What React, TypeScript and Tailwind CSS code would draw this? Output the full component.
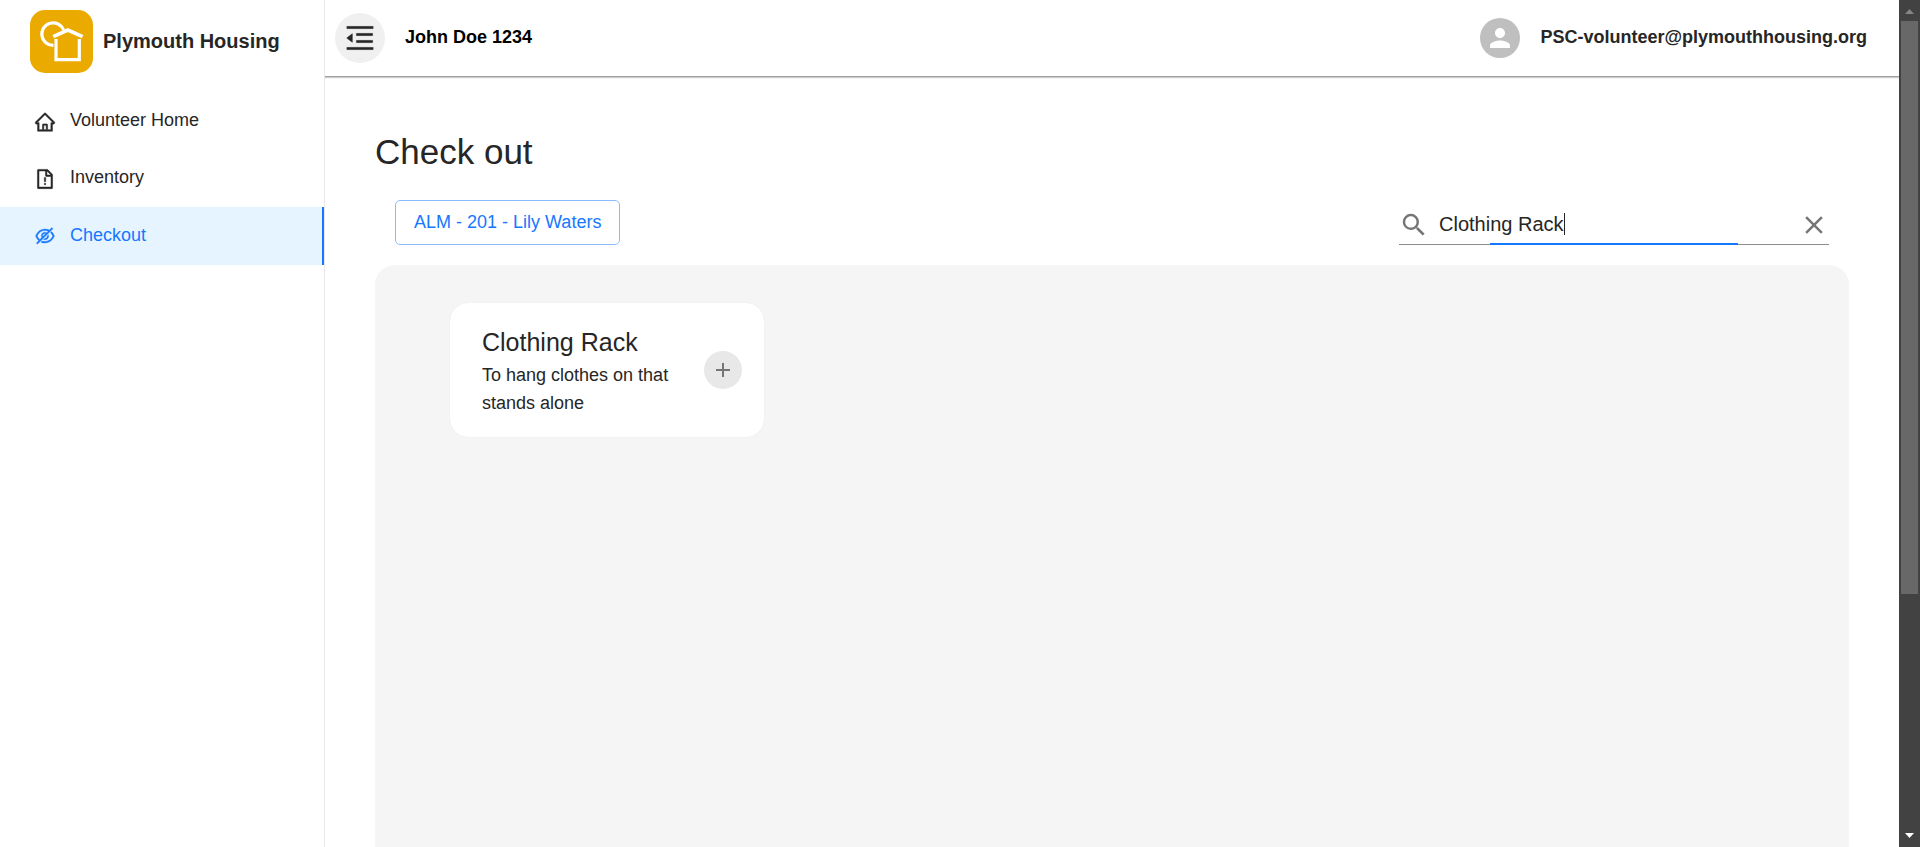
import { useState } from "react";
import type { ReactNode } from "react";
import {
  AiOutlineHome,
  AiOutlineFileExclamation,
  AiOutlineEyeInvisible,
  AiOutlineMenuFold,
} from "react-icons/ai";
import { MdAdd, MdClose, MdPerson, MdSearch } from "react-icons/md";

function Logo() {
  return (
    <svg viewBox="0 0 63 63" className="size-[63px] shrink-0" aria-hidden="true">
      <rect width="63" height="63" rx="15" fill="#eaaa00" />
      <g fill="none" stroke="#fff" strokeWidth="3.2">
        <path d="M23.5 35.4A11.3 11.3 0 1 1 33.6 19.8" />
        <path d="M23.2 26.6 37.8 20 52.6 26.6" strokeWidth="3.7" />
        <path d="M26 29V49.7H49.3V29" />
      </g>
    </svg>
  );
}

function NavItem({ icon, label, active }: { icon: ReactNode; label: string; active?: boolean }) {
  return (
    <li>
      <a
        href="#"
        aria-current={active ? "page" : undefined}
        className={
          active
            ? "flex h-[58px] items-center gap-3.5 border-r-2 border-[#1677ff] bg-[#e6f4ff] pl-[34px] text-[#1677ff]"
            : "flex h-[57px] items-center gap-3.5 pl-[34px] text-[#262626]"
        }
      >
        {icon}
        <span className="pb-0.5">{label}</span>
      </a>
    </li>
  );
}

function Sidebar() {
  return (
    <aside className="w-[325px] shrink-0 border-r border-[#e8e8e8]">
      <div className="flex items-center gap-2.5 pt-2.5 pl-[30px]">
        <Logo />
        <span className="pb-0.5 text-[20px] font-bold text-[#262626]">Plymouth Housing</span>
      </div>
      <nav className="mt-5">
        <ul>
          <NavItem icon={<AiOutlineHome size={22} strokeWidth={24} />} label="Volunteer Home" />
          <NavItem icon={<AiOutlineFileExclamation size={22} strokeWidth={24} />} label="Inventory" />
          <NavItem icon={<AiOutlineEyeInvisible size={22} strokeWidth={16} />} label="Checkout" active />
        </ul>
      </nav>
    </aside>
  );
}

function Header() {
  return (
    <header className="flex h-[77px] shrink-0 items-center border-b border-[#a0a0a0] pr-8 pl-2.5 shadow-[0_1px_1px_rgba(0,0,0,0.2)]">
      <button
        type="button"
        aria-label="Collapse menu"
        className="flex size-[50px] items-center justify-center rounded-full bg-[#f0f0f0] text-[#262626]"
      >
        <AiOutlineMenuFold size={34} strokeWidth={6} />
      </button>
      <span className="ml-5 pb-0.5 font-bold text-black">John Doe 1234</span>
      <div className="ml-auto flex items-center gap-5">
        <span className="flex size-10 items-center justify-center rounded-full bg-[#bfbfbf] text-white">
          <MdPerson size={30} />
        </span>
        <span className="pb-0.5 font-bold text-[#262626]">PSC-volunteer@plymouthhousing.org</span>
      </div>
    </header>
  );
}

function SearchField() {
  const [query, setQuery] = useState("Clothing Rack");
  return (
    <div className="relative flex h-10 w-[430px] items-center border-b border-[#8c8c8c] text-[#757575]">
      <label htmlFor="search" aria-label="Search" className="shrink-0">
        <MdSearch size={30} />
      </label>
      <input
        id="search"
        type="text"
        value={query}
        onChange={(e) => setQuery(e.target.value)}
        className="ml-2.5 min-w-0 flex-1 bg-transparent pb-0.5 text-[20px] text-[#262626] caret-transparent outline-none"
      />
      <button type="button" aria-label="Clear search" onClick={() => setQuery("")}>
        <MdClose size={30} />
      </button>
      <span className="absolute top-2 left-[165px] h-[22px] w-px bg-[#262626]" />
      <span className="absolute -bottom-px left-[91px] h-0.5 w-[248px] bg-[#1677ff]" />
    </div>
  );
}

function ItemCard({ title, text }: { title: string; text: string }) {
  return (
    <article className="flex w-[314px] items-center justify-between rounded-[18px] bg-white py-5 pr-[22px] pl-8 text-[#262626] shadow-[0_0_1px_rgba(0,0,0,0.12)]">
      <div className="w-[200px]">
        <h2 className="text-[25px] leading-[38px]">{title}</h2>
        <p className="leading-7">{text}</p>
      </div>
      <button
        type="button"
        aria-label={`Add ${title}`}
        className="flex size-[38px] items-center justify-center rounded-full bg-[#e8e8e8] text-[#757575]"
      >
        <MdAdd size={24} />
      </button>
    </article>
  );
}

function ScrollRail() {
  return (
    <div className="flex w-[21px] shrink-0 flex-col items-center bg-[#424242]" aria-hidden="true">
      <svg viewBox="0 0 21 21" className="size-[21px] shrink-0">
        <path d="M6 14 10.5 9 15 14Z" fill="#858585" />
      </svg>
      <div className="h-[67.7%] w-[17px] bg-[#686868]" />
      <svg viewBox="0 0 21 21" className="mt-auto size-[21px] shrink-0">
        <path d="M6 7 10.5 12 15 7Z" fill="#fff" />
      </svg>
    </div>
  );
}

export default function App() {
  return (
    <div className="flex h-screen overflow-hidden bg-white font-['Liberation_Sans',Arial,sans-serif] text-[18px]">
      <Sidebar />
      <div className="flex min-w-0 flex-1 flex-col overflow-hidden">
        <Header />
        <main className="flex flex-1 flex-col px-[50px] pt-[50px]">
          <h1 className="text-[35px] leading-[50px] text-[#262626]">Check out</h1>
          <div className="mt-[23px] mb-5 flex items-end justify-between px-5">
            <button
              type="button"
              className="h-[45px] rounded-[5px] border border-[#8bbbff] px-[18px] text-[#1677ff]"
            >
              ALM - 201 - Lily Waters
            </button>
            <SearchField />
          </div>
          <section className="flex flex-1 items-start rounded-t-[20px] bg-[#f5f5f5] px-[75px] py-[38px]">
            <ItemCard title="Clothing Rack" text="To hang clothes on that stands alone" />
          </section>
        </main>
      </div>
      <ScrollRail />
    </div>
  );
}
